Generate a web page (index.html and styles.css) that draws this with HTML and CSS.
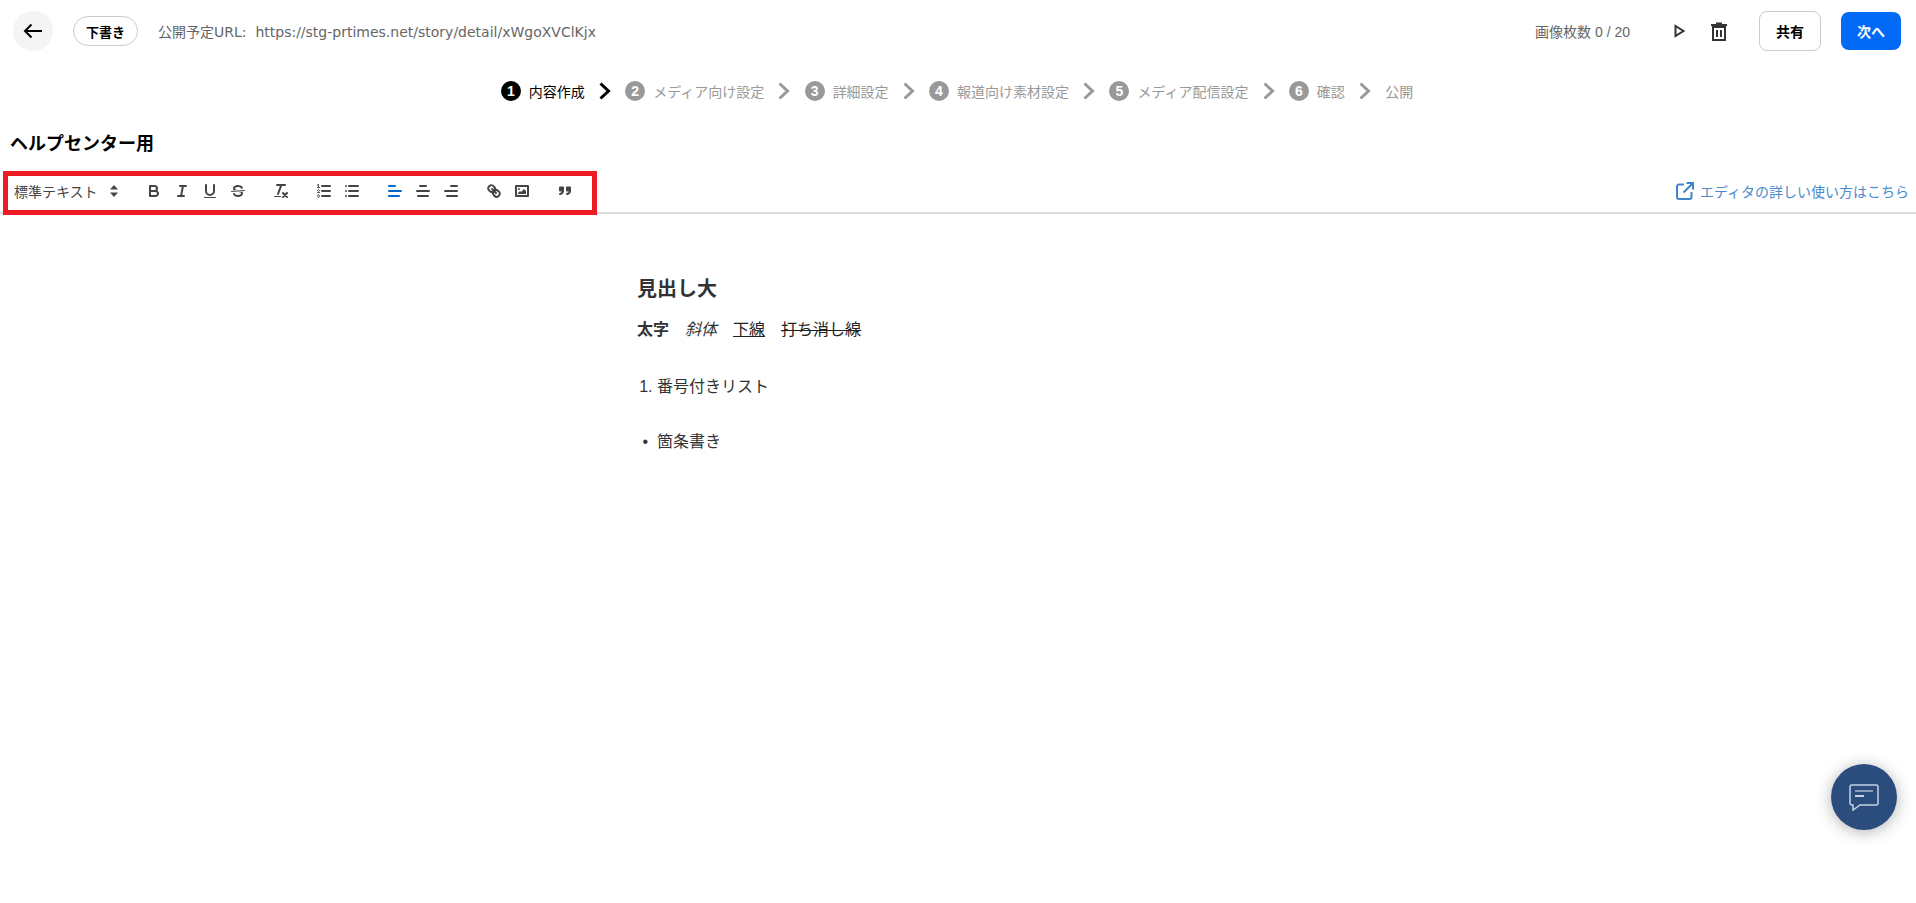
FILE: index.html
```html
<!DOCTYPE html>
<html lang="ja">
<head>
    <meta charset="UTF-8">
    <title>ヘルプセンター用</title>
    <link rel="stylesheet" href="styles.css">
</head>
<body>
    <header class="topbar">
        <button class="back">
            <svg width="20" height="16" viewBox="0 0 20 16"><path d="M19 8H2M8.500 1.500 2 8l6.500 6.500"/></svg>
        </button>
        <span class="status">下書き</span>
        <span class="url">公開予定URL:&nbsp; https://stg-prtimes.net/story/detail/xWgoXVClKjx</span>
        <span class="count">画像枚数 0 / 20</span>
        <svg class="play" width="12" height="14" viewBox="0 0 12 14"><path d="M1.500 2v10l8-5z"/></svg>
        <svg class="trash" width="18" height="19" viewBox="0 0 18 19">
            <path d="M3 5h12v13H3zM7 8v7M11 8v7"/>
            <path d="M1 3h16M6 1.500h6" />
        </svg>
        <button class="share">共有</button>
        <button class="next">次へ</button>
    </header>

    <nav class="steps">
        <span class="step current"><i>1</i>内容作成</span>
        <svg class="chevron current" width="12" height="18" viewBox="0 0 12 18"><path d="M1.500 1.500 9.500 9l-8 7.500"/></svg>
        <span class="step"><i>2</i>メディア向け設定</span>
        <svg class="chevron" width="12" height="18" viewBox="0 0 12 18"><path d="M1.500 1.500 9.500 9l-8 7.500"/></svg>
        <span class="step"><i>3</i>詳細設定</span>
        <svg class="chevron" width="12" height="18" viewBox="0 0 12 18"><path d="M1.500 1.500 9.500 9l-8 7.500"/></svg>
        <span class="step"><i>4</i>報道向け素材設定</span>
        <svg class="chevron" width="12" height="18" viewBox="0 0 12 18"><path d="M1.500 1.500 9.500 9l-8 7.500"/></svg>
        <span class="step"><i>5</i>メディア配信設定</span>
        <svg class="chevron" width="12" height="18" viewBox="0 0 12 18"><path d="M1.500 1.500 9.500 9l-8 7.500"/></svg>
        <span class="step"><i>6</i>確認</span>
        <svg class="chevron" width="12" height="18" viewBox="0 0 12 18"><path d="M1.500 1.500 9.500 9l-8 7.500"/></svg>
        <span class="step">公開</span>
    </nav>

    <h1 class="title">ヘルプセンター用</h1>

    <div class="toolbar">
        <span class="picker">標準テキスト
            <svg width="8" height="12" viewBox="0 0 8 12"><path d="M4 0 8 4.500H0zM4 12 0 7.500h8z"/></svg>
        </span>
        <span class="group">
            <span class="tool"><svg viewBox="0 0 18 18"><path d="M5 4h4.500A2.500 2.500 0 0 1 12 6.500 2.500 2.500 0 0 1 9.500 9H5zM5 9h5.500A2.500 2.500 0 0 1 13 11.500 2.500 2.500 0 0 1 10.500 14H5z"/></svg></span>
            <span class="tool"><svg viewBox="0 0 18 18"><path d="M7 4h6M5 14h6M8 14l2-10"/></svg></span>
            <span class="tool"><svg viewBox="0 0 18 18"><path d="M5 3v6a4 4 0 0 0 4 4 4 4 0 0 0 4-4V3"/><rect class="fill" height="1" rx="0.5" width="12" x="3" y="15"/></svg></span>
            <span class="tool"><svg viewBox="0 0 18 18"><path class="thin" d="M15.500 8.500 2.500 9.500"/><path class="fill" d="M9 8C6.500 7.800 6 7.500 6 6.500 6 5.800 7.300 5 9 5c1.600 0 2.800.7 3 1.300a1 1 0 0 0 1.900-.6C13.400 4.100 11.400 3 9 3 6.200 3 4 4.500 4 6.500a3.200 3.200 0 0 0 .5 1.800z"/><path class="fill" d="M9 10c2.500.2 3 .5 3 1.500 0 .7-1.300 1.500-3 1.500-1.600 0-2.800-.7-3-1.300a1 1 0 1 0-1.900.6C4.600 13.900 6.600 15 9 15c2.800 0 5-1.500 5-3.500a3.200 3.200 0 0 0-.5-1.800z"/></svg></span>
        </span>
        <span class="group">
            <span class="tool"><svg viewBox="0 0 18 18"><path d="M5 3h8M6 12l3.350-9M11 11l4 4M15 11l-4 4"/><rect class="fill" height="1" rx="0.5" width="7" x="2" y="14"/></svg></span>
        </span>
        <span class="group">
            <span class="tool"><svg viewBox="0 0 18 18"><path d="M7 4h8M7 9h8M7 14h8"/><path class="thin" d="M2.500 5.500h2M3.500 5.500v-3l-1 .5M4.500 10.500h-2c0-.2 1.850-1.100 1.850-2.200A1 1 0 0 0 2.500 8.200M2.500 14.800a1 1 0 0 0 1.850-.1.700.7 0 0 0-.6-.7.700.7 0 0 0 .6-.7 1 1 0 0 0-1.850-.1"/></svg></span>
            <span class="tool"><svg viewBox="0 0 18 18"><path d="M6 4h9M6 9h9M6 14h9M3 4h0M3 9h0M3 14h0"/></svg></span>
        </span>
        <span class="group">
            <span class="tool active"><svg viewBox="0 0 18 18"><path d="M3 9h12M3 14h10M3 4h6"/></svg></span>
            <span class="tool"><svg viewBox="0 0 18 18"><path d="M15 9H3M14 14H4M12 4H6"/></svg></span>
            <span class="tool"><svg viewBox="0 0 18 18"><path d="M15 9H3M15 14H5M15 4H9"/></svg></span>
        </span>
        <span class="group">
            <span class="tool"><svg viewBox="0 0 18 18"><path d="M7 7l4 4"/><path d="M8.900 4.577a3.476 3.476 0 0 1 .36 4.679A3.476 3.476 0 0 1 4.577 8.900C3.185 7.500 2.035 6.400 4.217 4.217S7.500 3.185 8.900 4.577z"/><path d="M13.423 9.100a3.476 3.476 0 0 0-4.679-.36 3.476 3.476 0 0 0 .36 4.679c1.392 1.392 2.500 2.542 4.679.36s1.032-3.279-.36-4.679z"/></svg></span>
            <span class="tool"><svg viewBox="0 0 18 18"><path d="M3 4h12v10H3z"/><circle class="fill" cx="6" cy="7" r="1"/><path class="fill" d="M5 12v-1l2-2 1 1 3-3 2 2v3z"/></svg></span>
        </span>
        <span class="group">
            <span class="tool"><svg viewBox="0 0 18 18"><path class="solid" d="M4 5.500h3v3H4zM11 5.500h3v3h-3z"/><path d="M7 8.500c0 2-1.500 3.200-3 3.500M14 8.500c0 2-1.500 3.200-3 3.500"/></svg></span>
        </span>
        <a class="help">
            <svg width="18" height="18" viewBox="0 0 18 18"><path d="M8 2.500H3A2 2 0 0 0 1 4.500v10.500a2 2 0 0 0 2 2h10.500a2 2 0 0 0 2-2v-5M7.500 10.500 17 1M10.500 1H17v6.500"/></svg>
            エディタの詳しい使い方はこちら
        </a>
    </div>

    <main class="editor">
        <h2>見出し大</h2>
        <p><strong>太字</strong>　<em>斜体</em>　<u>下線</u>　<s>打ち消し線</s></p>
        <ol><li>番号付きリスト</li></ol>
        <ul><li>箇条書き</li></ul>
    </main>

    <!-- annotation on the screenshot -->
    <div class="highlight"></div>

    <button class="chat">
        <svg width="30" height="27" viewBox="0 0 30 27"><path class="outline" d="M3 1h24a2 2 0 0 1 2 2v16a2 2 0 0 1-2 2H11l-7 5v-5H3a2 2 0 0 1-2-2V3a2 2 0 0 1 2-2z"/><path class="bar" d="M6 7h18"/><path d="M6 12h9"/></svg>
    </button>
</body>
</html>
```

FILE: styles.css
```css
* {
    box-sizing: border-box;
}
html, body {
    height: 100%;
}
body {
    margin: 0;
    overflow: hidden;
    background-color: #fff;
    color: #333;
    font-family: "Liberation Sans", "Noto Sans CJK JP", sans-serif;
    font-size: 14px;
}
button {
    font-family: inherit;
    cursor: pointer;
}

.topbar {
    display: flex;
    align-items: center;
    height: 62px;
    padding: 0 15px 0 13px;
}
.back {
    display: flex;
    align-items: center;
    justify-content: center;
    width: 40px;
    height: 40px;
    padding: 0;
    border: none;
    border-radius: 50%;
    background-color: #f4f4f4;
}
.back svg {
    fill: none;
    stroke: #000;
    stroke-width: 2;
}
.status {
    display: flex;
    align-items: center;
    justify-content: center;
    width: 65px;
    height: 30px;
    margin-left: 20px;
    border: 1px solid #ccc;
    border-radius: 15px;
    color: #000;
    font-size: 13px;
    font-weight: bold;
}
.url {
    margin-left: 20px;
    color: #666;
    font-family: "DejaVu Sans", "Noto Sans CJK JP", sans-serif;
    font-size: 14px;
}
.count {
    margin-left: auto;
    color: #666;
}
.play {
    margin-left: 44px;
    fill: none;
    stroke: #333;
    stroke-width: 2;
}
.trash {
    margin-left: 24px;
    fill: none;
    stroke: #333;
    stroke-width: 2;
}
.share, .next {
    height: 38px;
    padding: 0;
    border-radius: 8px;
    font-size: 14px;
    font-weight: bold;
}
.share {
    width: 62px;
    height: 40px;
    margin-left: 31px;
    border: 1px solid #ccc;
    background-color: #fff;
    color: #000;
}
.next {
    width: 60px;
    margin-left: 20px;
    border: none;
    background-color: #0069f5;
    color: #fff;
}

.steps {
    display: flex;
    align-items: center;
    justify-content: center;
    gap: 14.2px;
    height: 57px;
    padding-right: 2px;
}
.step {
    display: flex;
    align-items: center;
    gap: 8px;
    color: #999;
}
.step i {
    display: flex;
    align-items: center;
    justify-content: center;
    width: 20px;
    height: 20px;
    border-radius: 50%;
    background-color: #999;
    color: #fff;
    font-style: normal;
    font-size: 14px;
    font-weight: bold;
}
.step.current {
    color: #000;
}
.step.current i {
    background-color: #000;
}
.chevron {
    fill: none;
    stroke: #999;
    stroke-width: 3;
}
.chevron.current {
    stroke: #000;
}

.title {
    margin: 12px 0 0 10px;
    color: #000;
    font-size: 18px;
    line-height: 26px;
}

.toolbar {
    display: flex;
    align-items: center;
    gap: 15px;
    height: 44px;
    margin-top: 13px;
    padding: 0 7px 0 6px;
    border-bottom: 2px solid #ddd;
}
.picker {
    display: flex;
    align-items: center;
    justify-content: space-between;
    width: 118.5px;
    padding: 0 7px 0 8px;
    color: #444;
}
.picker svg {
    fill: #444;
}
.group {
    display: flex;
}
.tool {
    display: flex;
    width: 28px;
    height: 24px;
    padding: 3px 5px;
}
.tool svg {
    width: 18px;
    height: 18px;
    fill: none;
    stroke: #444;
    stroke-width: 2;
    stroke-linecap: round;
    stroke-linejoin: round;
}
.tool svg .fill {
    fill: #444;
    stroke: none;
}
.tool svg .solid {
    fill: #444;
}
.tool svg .thin {
    stroke-width: 1;
}
.tool.active svg {
    stroke: #06c;
}
.help {
    display: flex;
    align-items: center;
    gap: 6px;
    margin-left: auto;
    color: #4a8acb;
}
.help svg {
    fill: none;
    stroke: #3d85cc;
    stroke-width: 2;
}

.editor {
    width: 642px;
    margin: 0 auto;
    padding-top: 60px;
    color: #333;
    font-size: 16px;
    line-height: 24px;
}
.editor h2 {
    margin: 0;
    font-size: 20px;
    line-height: 30px;
}
.editor p {
    margin: 14px 0 0;
}
.editor em {
    font-weight: normal;
}
.editor u, .editor s {
    color: #222;
}
.editor ol, .editor ul {
    margin: 31px 0 0;
    padding-left: 20px;
}
.editor ol {
    margin-top: 33px;
}
.editor ul li::marker {
    content: "•\00a0\00a0";
}

.highlight {
    position: absolute;
    left: 3px;
    top: 171px;
    width: 594px;
    height: 44px;
    border: 5px solid #ed1c24;
}
.chat {
    position: absolute;
    right: 19px;
    bottom: 73px;
    display: flex;
    align-items: center;
    justify-content: center;
    width: 66px;
    height: 66px;
    padding: 0;
    border: none;
    border-radius: 50%;
    background-color: #2a4d7e;
    box-shadow: 0 2px 16px rgba(0, 0, 0, 0.3);
}
.chat svg {
    fill: none;
    stroke: #fff;
    stroke-width: 1.500;
}
.chat svg .outline {
    stroke: #c5d2e2;
}
.chat svg .bar {
    stroke: #a9bbd1;
}
```
